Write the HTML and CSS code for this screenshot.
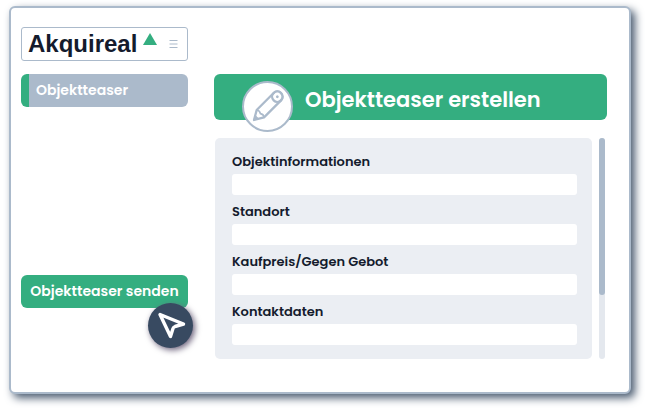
FILE: index.html
```html
<!DOCTYPE html>
<html lang="de">
<head>
<meta charset="utf-8">
<meta name="viewport" content="width=device-width, initial-scale=1">
<title>Akquireal</title>
<link rel="stylesheet" href="styles.css">
</head>
<body>
<div class="window">
  <header class="brand">
    <span class="brand-name">Akquireal</span>
    <svg class="brand-mark" viewBox="0 0 14 12" aria-hidden="true"><path d="M7 0L14 12H0z" fill="#34ae80"/></svg>
    <button class="menu" type="button" aria-label="Menü">
      <svg viewBox="0 0 8 8" aria-hidden="true"><path d="M0 .5h8M0 4h8M0 7.5h8" stroke="#abbacb" stroke-width="1"/></svg>
    </button>
  </header>
  <aside class="sidebar">
    <nav><a class="nav-item" href="#teaser">Objektteaser</a></nav>
    <div class="send">
      <button class="send-button" type="submit" form="teaser">Objektteaser senden</button>
      <span class="pointer">
        <svg viewBox="0 0 45 45" aria-hidden="true"><path d="M12 11.500L35.500 21L27 23.500Q25.500 24 25 25.500L22.500 33.500z" fill="none" stroke="#fff" stroke-width="3.400" stroke-linejoin="round"/></svg>
      </span>
    </div>
  </aside>
  <main>
    <div class="title">
      <span class="title-icon">
        <svg viewBox="2 2 47 47" aria-hidden="true">
          <g transform="translate(12 39) rotate(-45)" fill="none" stroke="#abbacb" stroke-width="2.300" stroke-linejoin="round">
            <path d="M0 0L9 -5.200H33A5.200 5.200 0 0 1 33 5.200H9L0 0z"/>
            <path d="M9 -5.200Q11 -2.500 9 0Q11 2.500 9 5.200" stroke-width="1.600"/>
            <circle cx="33" cy="0" r="5.200"/>
            <circle cx="33" cy="0" r="1.400" fill="#abbacb" stroke="none"/>
            <path d="M0 0L4 -2.300V2.300z" fill="#abbacb" stroke-width="1"/>
          </g>
        </svg>
      </span>
      <h1>Objektteaser erstellen</h1>
    </div>
    <div class="content">
      <form class="form" id="teaser">
        <div class="field"><label for="info">Objektinformationen</label><input id="info" type="text"></div>
        <div class="field"><label for="place">Standort</label><input id="place" type="text"></div>
        <div class="field"><label for="price">Kaufpreis/Gegen Gebot</label><input id="price" type="text"></div>
        <div class="field"><label for="contact">Kontaktdaten</label><input id="contact" type="text"></div>
      </form>
      <div class="track"><div class="thumb"></div></div>
    </div>
  </main>
</div>
</body>
</html>
```
FILE: styles.css
```css
* { box-sizing: border-box; }

body {
  margin: 0;
  padding: 6px 18px 16px 9px;
  background: #fff;
  color: #141b2d;
  font-family: Poppins, Inter, sans-serif;
}

button, input { font: inherit; border: 0; }

.window {
  display: grid;
  grid-template-columns: 167px 1fr;
  grid-template-rows: 34px 1fr;
  gap: 13px 26px;
  min-height: calc(100vh - 22px);
  padding: 19px 22px 33px 10px;
  border: 2px solid #abbacb;
  border-radius: 6px;
  background: #fff;
  box-shadow: 4px 4px 8px #4a5b70;
}

.brand {
  display: flex;
  align-items: center;
  padding: 0 9px 0 6px;
  border: 1px solid #abbacb;
  border-radius: 3px;
}

.brand-name {
  font: bold 24px/32px "Liberation Sans", sans-serif;
}

.brand-mark {
  width: 14px;
  height: 12px;
  margin: 0 auto 10px 6px;
}

.menu {
  display: flex;
  padding: 0;
  background: none;
}

.menu svg { width: 9px; height: 8px; }

.sidebar {
  grid-column: 1;
  display: flex;
  flex-direction: column;
  justify-content: space-between;
  padding-bottom: 51px;
}

.nav-item {
  display: block;
  padding-left: 7px;
  border-left: 8px solid #34ae80;
  border-radius: 6px;
  background: #abbacb;
  color: #fff;
  font-size: 14px;
  font-weight: 600;
  line-height: 33px;
  text-decoration: none;
}

.send { position: relative; }

.send-button {
  display: block;
  width: 100%;
  padding: 0;
  border-radius: 6px;
  background: #34ae80;
  color: #fff;
  font-size: 14px;
  font-weight: 600;
  line-height: 33px;
  white-space: nowrap;
}

.pointer {
  position: absolute;
  top: 28px;
  right: -5px;
  width: 45px;
  height: 45px;
  border-radius: 50%;
  background: #384a61;
  box-shadow: 2px 2px 6px #6a607a;
}

.pointer svg, .title-icon svg { display: block; width: 100%; height: 100%; }

main {
  display: flex;
  flex-direction: column;
  gap: 18px;
}

.title {
  position: relative;
  padding: 7px 16px 1px 91px;
  border-radius: 6px;
  background: #34ae80;
  color: #fff;
}

h1 {
  margin: 0;
  font-size: 21px;
  font-weight: 600;
  line-height: 38px;
}

.title-icon {
  position: absolute;
  top: 7px;
  left: 28px;
  width: 51px;
  height: 51px;
  border: 2px solid #abbacb;
  border-radius: 50%;
  background: #fff;
}

.content {
  flex: 1;
  display: flex;
  gap: 7px;
  padding: 0 2px 0 1px;
}

.form {
  flex: 1;
  padding: 12px 15px 14px 17px;
  border-radius: 5px;
  background: #ebeef3;
}

.field label {
  display: block;
  font-size: 13px;
  font-weight: 600;
  line-height: 24px;
}

.field + .field { margin-top: 5px; }

.field input {
  display: block;
  width: 100%;
  height: 21px;
  padding: 0 6px;
  border-radius: 3px;
  background: #fff;
}

.track {
  width: 6px;
  border-radius: 3px;
  background: #e4e8ee;
}

.thumb {
  height: 71%;
  border-radius: 3px;
  background: #abbacb;
}
```
